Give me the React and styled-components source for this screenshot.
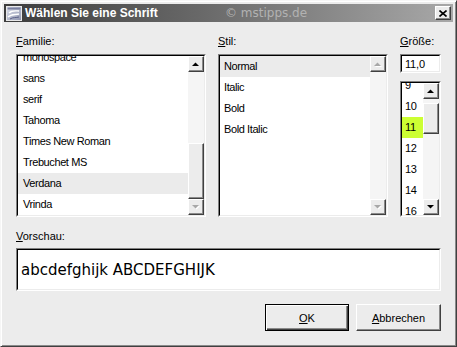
import React from 'react'
import styled, { createGlobalStyle } from 'styled-components'

const Global = createGlobalStyle`
  html, body {
    margin: 0;
    padding: 0;
    background: #ffffff;
  }
  body {
    font-family: "Liberation Sans", Arial, sans-serif;
    font-size: 11px;
    color: #000;
  }
`

const Window = styled.div`
  position: relative;
  width: 457px;
  height: 347px;
  box-sizing: border-box;
  padding: 3px;
  background: #ececec;
  border: 1px solid;
  border-color: #f6f6f6 #404040 #404040 #f6f6f6;
  box-shadow: inset 1px 1px 0 #ffffff, inset -1px -1px 0 #8a8a8a;
  display: flex;
  flex-direction: column;
`

const TitleBar = styled.div`
  position: relative;
  height: 18px;
  display: flex;
  align-items: center;
  padding: 0 2px;
  background: linear-gradient(to right, #3c3c3c, #6a6a6a 45%, #a8a8a8);
  color: #fff;
`

const TitleText = styled.span`
  margin-left: 3px;
  font-weight: bold;
  font-size: 12px;
  flex: 1;
`

const Watermark = styled.span`
  position: absolute;
  left: 221px;
  top: 2px;
  font-family: "DejaVu Sans", Verdana, sans-serif;
  font-size: 12px;
  color: #b2b2b2;
`

const Raised = styled.div`
  box-sizing: border-box;
  background: #ececec;
  border: 1px solid;
  border-color: #ffffff #404040 #404040 #ffffff;
  box-shadow: inset -1px -1px 0 #8a8a8a;
`

const CloseButton = styled(Raised)`
  width: 16px;
  height: 14px;
  display: flex;
  align-items: center;
  justify-content: center;
`

const Body = styled.div`
  flex: 1;
  padding: 13px 12px 0 12px;
  display: flex;
  flex-direction: column;
`

const Columns = styled.div`
  display: grid;
  grid-template-columns: 190px 170px 41px;
  column-gap: 12px;
`

const Column = styled.div`
  display: flex;
  flex-direction: column;
`

const Label = styled.div`
  line-height: 13px;
  height: 13px;
  margin-bottom: ${p => p.gap || 6}px;
`

const Key = styled.span`
  text-decoration: underline;
  text-underline-offset: 1px;
`

const Sunken = styled.div`
  box-sizing: border-box;
  border: 1px solid;
  border-color: #808080 #ffffff #ffffff #808080;
  height: ${p => p.h}px;
  display: flex;
`

const SunkenInner = styled.div`
  flex: 1;
  min-width: 0;
  display: flex;
  border: 1px solid;
  border-color: #000000 #ececec #ececec #000000;
  background: #fff;
  overflow: hidden;
`

const ItemList = styled.div`
  flex: 1;
  min-width: 0;
  overflow: hidden;
`

const Items = styled.div`
  margin-top: ${p => p.offset || 0}px;
`

const Item = styled.div`
  height: 21px;
  line-height: 21px;
  padding-left: ${p => p.pad || 4}px;
  letter-spacing: -0.4px;
  white-space: nowrap;
  background: ${p => (p.hl === 'green' ? '#ccff33' : p.hl ? '#ebebeb' : 'transparent')};
`

const ScrollBar = styled.div`
  width: 16px;
  display: flex;
  flex-direction: column;
`

const ScrollButton = styled(Raised)`
  width: 16px;
  height: 16px;
  flex: none;
  display: flex;
  align-items: center;
  justify-content: center;
`

const Track = styled.div`
  flex: ${p => (p.h ? 'none' : 1)};
  height: ${p => (p.h ? `${p.h}px` : 'auto')};
  background: #f5f5f5;
`

const Thumb = styled(Raised)`
  flex: none;
  height: ${p => p.h}px;
`

const SizeInput = styled.div`
  flex: 1;
  padding-left: 3px;
  line-height: 17px;
  letter-spacing: -0.2px;
`

const Preview = styled.div`
  flex: 1;
  display: flex;
  align-items: center;
  padding-left: 3px;
  font-family: "DejaVu Sans", Verdana, sans-serif;
  font-size: 15px;
`

const Buttons = styled.div`
  margin-top: 13px;
  display: flex;
  justify-content: flex-end;
  gap: 7px;
`

const PushButton = styled(Raised)`
  width: ${p => p.w}px;
  height: 27px;
  display: flex;
  align-items: center;
  justify-content: center;
  ${p => p.primary && `
    border: 1px solid #000;
    box-shadow: inset 1px 1px 0 #fff, inset -1px -1px 0 #404040, inset -2px -2px 0 #8a8a8a;
  `}
`

const Arrow = ({ dir = 'up', disabled }) => {
  const pts = dir === 'up' ? '0,4 7,4 3.5,0.5' : '0,0 7,0 3.5,3.5'
  return (
    <svg width="8" height="5" viewBox="0 0 8 5">
      {disabled && <polygon points={pts} fill="#fff" transform="translate(1,1)" />}
      <polygon points={pts} fill={disabled ? '#a8a8a8' : '#000'} />
    </svg>
  )
}

const Scroller = ({ upOff, downOff, thumbTop, thumbSize }) => (
  <ScrollBar>
    <ScrollButton>
      <Arrow dir="up" disabled={upOff} />
    </ScrollButton>
    {thumbSize ? (
      <>
        <Track h={thumbTop} />
        <Thumb h={thumbSize} />
        <Track />
      </>
    ) : (
      <Track />
    )}
    <ScrollButton>
      <Arrow dir="down" disabled={downOff} />
    </ScrollButton>
  </ScrollBar>
)

const DialogIcon = () => (
  <svg width="16" height="15" viewBox="0 0 16 15">
    <defs>
      <linearGradient id="ic" x1="0" y1="0" x2="1" y2="1">
        <stop offset="0" stopColor="#dfe3ee" />
        <stop offset="1" stopColor="#8d93ad" />
      </linearGradient>
    </defs>
    <rect x="0.5" y="0.5" width="15" height="14" fill="url(#ic)" stroke="#e8e8e8" />
    <rect x="1.5" y="1.5" width="13" height="2" fill="#7a80a0" />
    <path d="M3 7 C6 4, 10 5, 13 5" stroke="#ffffff" strokeWidth="1.4" fill="none" />
    <path d="M2 11 C5 8, 9 9, 13 8" stroke="#ffffff" strokeWidth="1.4" fill="none" />
    <path d="M4 13 C7 11, 10 12, 13 11" stroke="#5a6088" strokeWidth="1" fill="none" />
  </svg>
)

const families = ['monospace', 'sans', 'serif', 'Tahoma', 'Times New Roman', 'Trebuchet MS', 'Verdana', 'Vrinda']
const styles = ['Normal', 'Italic', 'Bold', 'Bold Italic']
const sizes = ['9', '10', '11', '12', '13', '14', '16']

export default function App() {
  return (
    <>
      <Global />
      <Window>
        <TitleBar>
          <DialogIcon />
          <TitleText>Wählen Sie eine Schrift</TitleText>
          <Watermark>© mstipps.de</Watermark>
          <CloseButton>
            <svg width="8" height="7" viewBox="0 0 8 7">
              <path d="M0.5 0.5 L7.5 6.5 M7.5 0.5 L0.5 6.5" stroke="#000" strokeWidth="1.6" />
            </svg>
          </CloseButton>
        </TitleBar>
        <Body>
          <Columns>
            <Column>
              <Label><Key>F</Key>amilie:</Label>
              <Sunken h={163}>
                <SunkenInner>
                  <ItemList>
                    <Items offset={-9}>
                      {families.map(f => (
                        <Item key={f} pad={5} hl={f === 'Verdana'}>{f}</Item>
                      ))}
                    </Items>
                  </ItemList>
                  <Scroller downOff thumbTop={71} thumbSize={56} />
                </SunkenInner>
              </Sunken>
            </Column>
            <Column>
              <Label><Key>S</Key>til:</Label>
              <Sunken h={163}>
                <SunkenInner>
                  <ItemList>
                    <Items>
                      {styles.map(s => (
                        <Item key={s} hl={s === 'Normal'}>{s}</Item>
                      ))}
                    </Items>
                  </ItemList>
                  <Scroller upOff downOff />
                </SunkenInner>
              </Sunken>
            </Column>
            <Column>
              <Label><Key>G</Key>röße:</Label>
              <Sunken h={19}>
                <SunkenInner>
                  <SizeInput>11,0</SizeInput>
                </SunkenInner>
              </Sunken>
              <Sunken h={136} style={{ marginTop: 8 }}>
                <SunkenInner>
                  <ItemList>
                    <Items offset={-8}>
                      {sizes.map(s => (
                        <Item key={s} pad={3} hl={s === '11' ? 'green' : false}>{s}</Item>
                      ))}
                    </Items>
                  </ItemList>
                  <Scroller thumbTop={4} thumbSize={31} />
                </SunkenInner>
              </Sunken>
            </Column>
          </Columns>
          <Label style={{ marginTop: 13 }} gap={5}><Key>V</Key>orschau:</Label>
          <Sunken h={43}>
            <SunkenInner>
              <Preview>abcdefghijk ABCDEFGHIJK</Preview>
            </SunkenInner>
          </Sunken>
          <Buttons>
            <PushButton primary w={84}><span><Key>O</Key>K</span></PushButton>
            <PushButton w={85}><span><Key>A</Key>bbrechen</span></PushButton>
          </Buttons>
        </Body>
      </Window>
    </>
  )
}
